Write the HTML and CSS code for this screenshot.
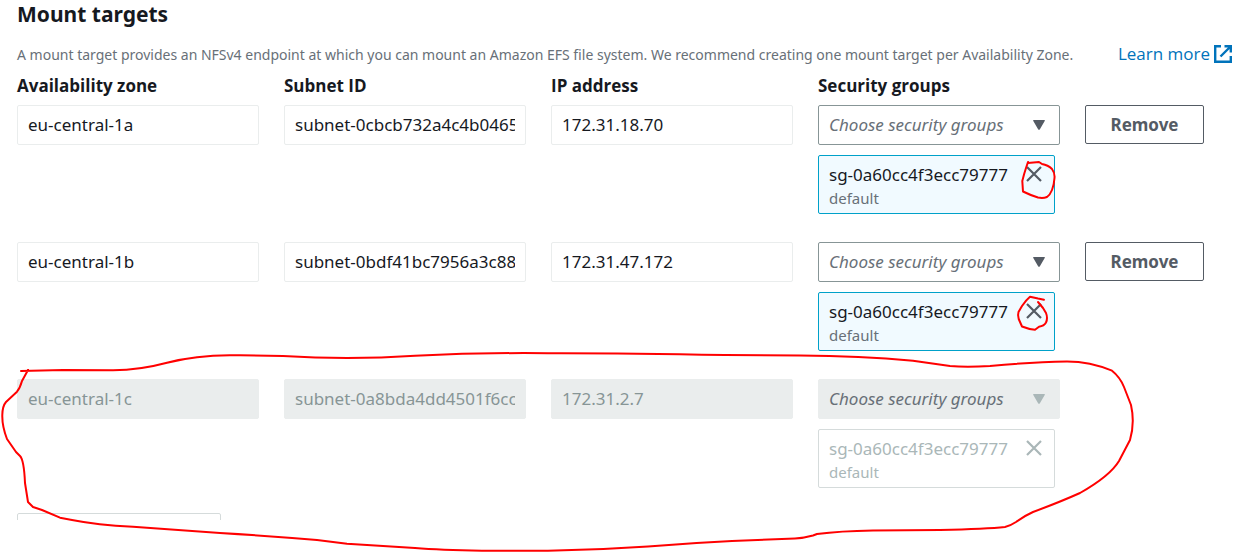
FILE: index.html
```html
<!DOCTYPE html>
<html lang="en">
<head>
<meta charset="utf-8">
<title>Mount targets</title>
<link rel="stylesheet" href="styles.css">
</head>
<body>
<svg class="sprite" aria-hidden="true">
  <symbol id="cross" viewBox="0 0 16 16"><path d="M1 1l14 14M15 1L1 15" fill="none" stroke="currentColor" stroke-width="2.200"/></symbol>
  <symbol id="caret" viewBox="0 0 12 10"><path d="M0.600 0h10.800q.8.200.3.900L6.900 9.300q-.9 1-1.800 0L.3.900Q-.2.200.6 0z" fill="currentColor"/></symbol>
</svg>
<main class="panel">
  <h2 class="title">Mount targets</h2>
  <div class="intro">
    <span>A mount target provides an NFSv4 endpoint at which you can mount an Amazon EFS file system. We recommend creating one mount target per Availability Zone.</span>
    <a class="learn" href="#">Learn more<svg class="external" viewBox="0 0 18 18" aria-hidden="true"><path d="M7 1.200H1.200v15.600h15.600V11M10.500 1.200h6.300v6.300M16.500 1.500L6.500 11.500" fill="none" stroke="currentColor" stroke-width="2.400"/></svg></a>
  </div>

  <form class="targets">
    <div class="row heads">
      <span id="h-zone">Availability zone</span>
      <span id="h-subnet">Subnet ID</span>
      <span id="h-ip">IP address</span>
      <span id="h-groups">Security groups</span>
    </div>

    <div class="row">
      <input class="field" aria-labelledby="h-zone" value="eu-central-1a">
      <input class="field" aria-labelledby="h-subnet" value="subnet-0cbcb732a4c4b0465">
      <input class="field" aria-labelledby="h-ip" value="172.31.18.70">
      <div class="groups">
        <div class="picker">
          <select class="select" aria-labelledby="h-groups"><option>Choose security groups</option></select>
          <svg class="caret" aria-hidden="true"><use href="#caret"/></svg>
        </div>
        <div class="token">
          <div class="token-text"><span class="token-id">sg-0a60cc4f3ecc79777</span><span class="token-name">default</span></div>
          <button class="dismiss" type="button"><svg class="cross"><use href="#cross"/></svg>
            <svg class="ring" viewBox="1016 157 42 42"><path d="M1028 163L1039 162L1042 164Q1048 165 1052 169Q1055 173 1054.500 178Q1054 185 1052 190Q1050 195 1047 197Q1043 198.500 1038 197.500Q1030 195 1023 191.500L1022.300 181Q1024 174 1026 168L1028 162"/></svg>
          </button>
        </div>
      </div>
      <button class="remove" type="button">Remove</button>
    </div>

    <div class="row">
      <input class="field" aria-labelledby="h-zone" value="eu-central-1b">
      <input class="field" aria-labelledby="h-subnet" value="subnet-0bdf41bc7956a3c88">
      <input class="field" aria-labelledby="h-ip" value="172.31.47.172">
      <div class="groups">
        <div class="picker">
          <select class="select" aria-labelledby="h-groups"><option>Choose security groups</option></select>
          <svg class="caret" aria-hidden="true"><use href="#caret"/></svg>
        </div>
        <div class="token">
          <div class="token-text"><span class="token-id">sg-0a60cc4f3ecc79777</span><span class="token-name">default</span></div>
          <button class="dismiss" type="button"><svg class="cross"><use href="#cross"/></svg>
            <svg class="ring" viewBox="1016 294 42 42"><path d="M1044 299.700L1038 298.500L1030 296.700Q1026 300 1022 306L1018.500 312Q1017.500 315 1018.700 319L1022 326.500Q1028 329 1035 329.700L1039 326.700Q1044 326 1046 322.500Q1048 318 1046 313L1043 308L1038 302"/></svg>
          </button>
        </div>
      </div>
      <button class="remove" type="button">Remove</button>
    </div>

    <div class="row">
      <input class="field" aria-labelledby="h-zone" value="eu-central-1c" disabled>
      <input class="field" aria-labelledby="h-subnet" value="subnet-0a8bda4dd4501f6cc" disabled>
      <input class="field" aria-labelledby="h-ip" value="172.31.2.7" disabled>
      <div class="groups">
        <div class="picker off">
          <select class="select" aria-labelledby="h-groups" disabled><option>Choose security groups</option></select>
          <svg class="caret" aria-hidden="true"><use href="#caret"/></svg>
        </div>
        <div class="token off">
          <div class="token-text"><span class="token-id">sg-0a60cc4f3ecc79777</span><span class="token-name">default</span></div>
          <button class="dismiss" type="button" disabled><svg class="cross"><use href="#cross"/></svg></button>
        </div>
      </div>
      <svg class="lasso" viewBox="0 352 1150 200" preserveAspectRatio="none" aria-hidden="true"><path d="M21 371L63 370L113 370.300Q140 370 167 362.700Q200 354 240 355.300L283 356Q350 360 415 355.700Q480 352.500 548 353.200Q622 353 725 355L800 355.500Q860 356 913 360.700L950 366Q966 367.500 990 366Q1033 362 1067 361.500Q1090 361.500 1112 370.700Q1120 377 1124 387L1131 405Q1135 423 1130 440L1119 461Q1110 476 1080 493Q1060 502 1033 512Q1024 516 1016 522Q1010 526 1005 527Q987 529 940 530L873 530.500Q840 531 817 534L813 535.500Q804 538 795 538.500L732 541Q690 543 648 546.500Q598 550 548 550.700H482Q440 550 415 548L347 543.700L317 540Q270 536 220 533L133 526.700Q97 525 72 520L60 517.700L42 510L33 507L28 502L25 483Q24 460 20 456L16 452L7 439Q2 426 2.300 415Q2.500 406 6 402L17 391.700Q20 388 22 381L28 370"/></svg>
    </div>

    <div class="add-clip"><button class="add" type="button" disabled></button></div>
  </form>
</main>
</body>
</html>
```
FILE: styles.css
```css
* { box-sizing: border-box; }

body {
  margin: 0;
  background: #fff;
  color: #16191f;
  font-family: "Noto Sans", "Open Sans", sans-serif;
  font-size: 17px;
  line-height: 22px;
}

.sprite { display: none; }

.panel { padding: 0 13px 32px 17px; }

.title {
  margin: 0;
  font-size: 21px;
  line-height: 28px;
  font-weight: 700;
}

.intro {
  display: flex;
  justify-content: space-between;
  align-items: baseline;
  margin: 15px 0 9px;
  color: #687078;
  font-size: 14px;
}

.learn {
  color: #0073bb;
  font-family: "Open Sans", "Noto Sans", sans-serif;
  font-size: 17px;
  text-decoration: none;
  white-space: nowrap;
}

.external {
  width: 18px;
  height: 18px;
  margin-left: 4px;
  vertical-align: -3px;
}

.targets { padding-right: 28px; }

.row {
  position: relative;
  display: grid;
  grid-template-columns: repeat(4, minmax(0, 1fr)) 119px;
  column-gap: 25px;
  align-items: start;
  margin-bottom: 28px;
}

.heads {
  margin-bottom: 8px;
  font-family: "Open Sans", "Noto Sans", sans-serif;
  font-size: 17px;
  font-weight: 700;
}

.field,
.select {
  width: 100%;
  height: 40px;
  padding: 0 10px;
  border: 1px solid #eaeded;
  border-radius: 2px;
  background: #fff;
  color: #16191f;
  font: inherit;
}

.field { padding-bottom: 2px; }

.picker { position: relative; }

.select {
  display: block;
  appearance: none;
  border-color: #879596;
  color: #687078;
  font-style: italic;
}

.field:disabled,
.select:disabled {
  border-color: #eaeded;
  background: #eaeded;
  opacity: 1;
}

.field:disabled { color: #879596; }

.caret {
  position: absolute;
  top: 15px;
  right: 15px;
  width: 12px;
  height: 10px;
  color: #545b64;
  pointer-events: none;
}

.off .caret { color: #aab7b8; }

.token {
  display: flex;
  justify-content: space-between;
  width: fit-content;
  min-width: 237px;
  margin-top: 10px;
  padding: 8px 12px 3px 10px;
  border: 1px solid #00a1c9;
  border-radius: 2px;
  background: #f1faff;
}

.token-text { display: grid; }

.token-id { line-height: 22px; }

.token-name {
  color: #687078;
  font-size: 15px;
  line-height: 24px;
}

.token.off {
  border-color: #d5dbdb;
  background: #fff;
  color: #aab7b8;
}

.off .token-name { color: #aab7b8; }

.dismiss {
  position: relative;
  width: 16px;
  height: 16px;
  margin-top: 2px;
  padding: 0;
  border: 0;
  background: none;
  color: #545b64;
}

.dismiss:disabled { color: #aab7b8; }

.cross {
  display: block;
  width: 16px;
  height: 16px;
}

.ring,
.lasso {
  position: absolute;
  fill: none;
  stroke: #f00;
  stroke-width: 2;
  stroke-linejoin: round;
  stroke-linecap: round;
  pointer-events: none;
}

.ring {
  top: -9px;
  left: -10px;
  width: 42px;
  height: 42px;
}

.lasso {
  top: -27px;
  left: -17px;
  width: calc(100% - 37px);
  height: 200px;
}

.remove {
  height: 39px;
  border: 1px solid #545b64;
  border-radius: 2px;
  background: #fff;
  color: #545b64;
  font: inherit;
  font-weight: 700;
}

.add-clip {
  height: 7px;
  margin-top: -3px;
  overflow: hidden;
}

.add {
  display: block;
  width: 204px;
  height: 39px;
  border: 1px solid #d5dbdb;
  border-radius: 2px;
  background: #fff;
}
```
